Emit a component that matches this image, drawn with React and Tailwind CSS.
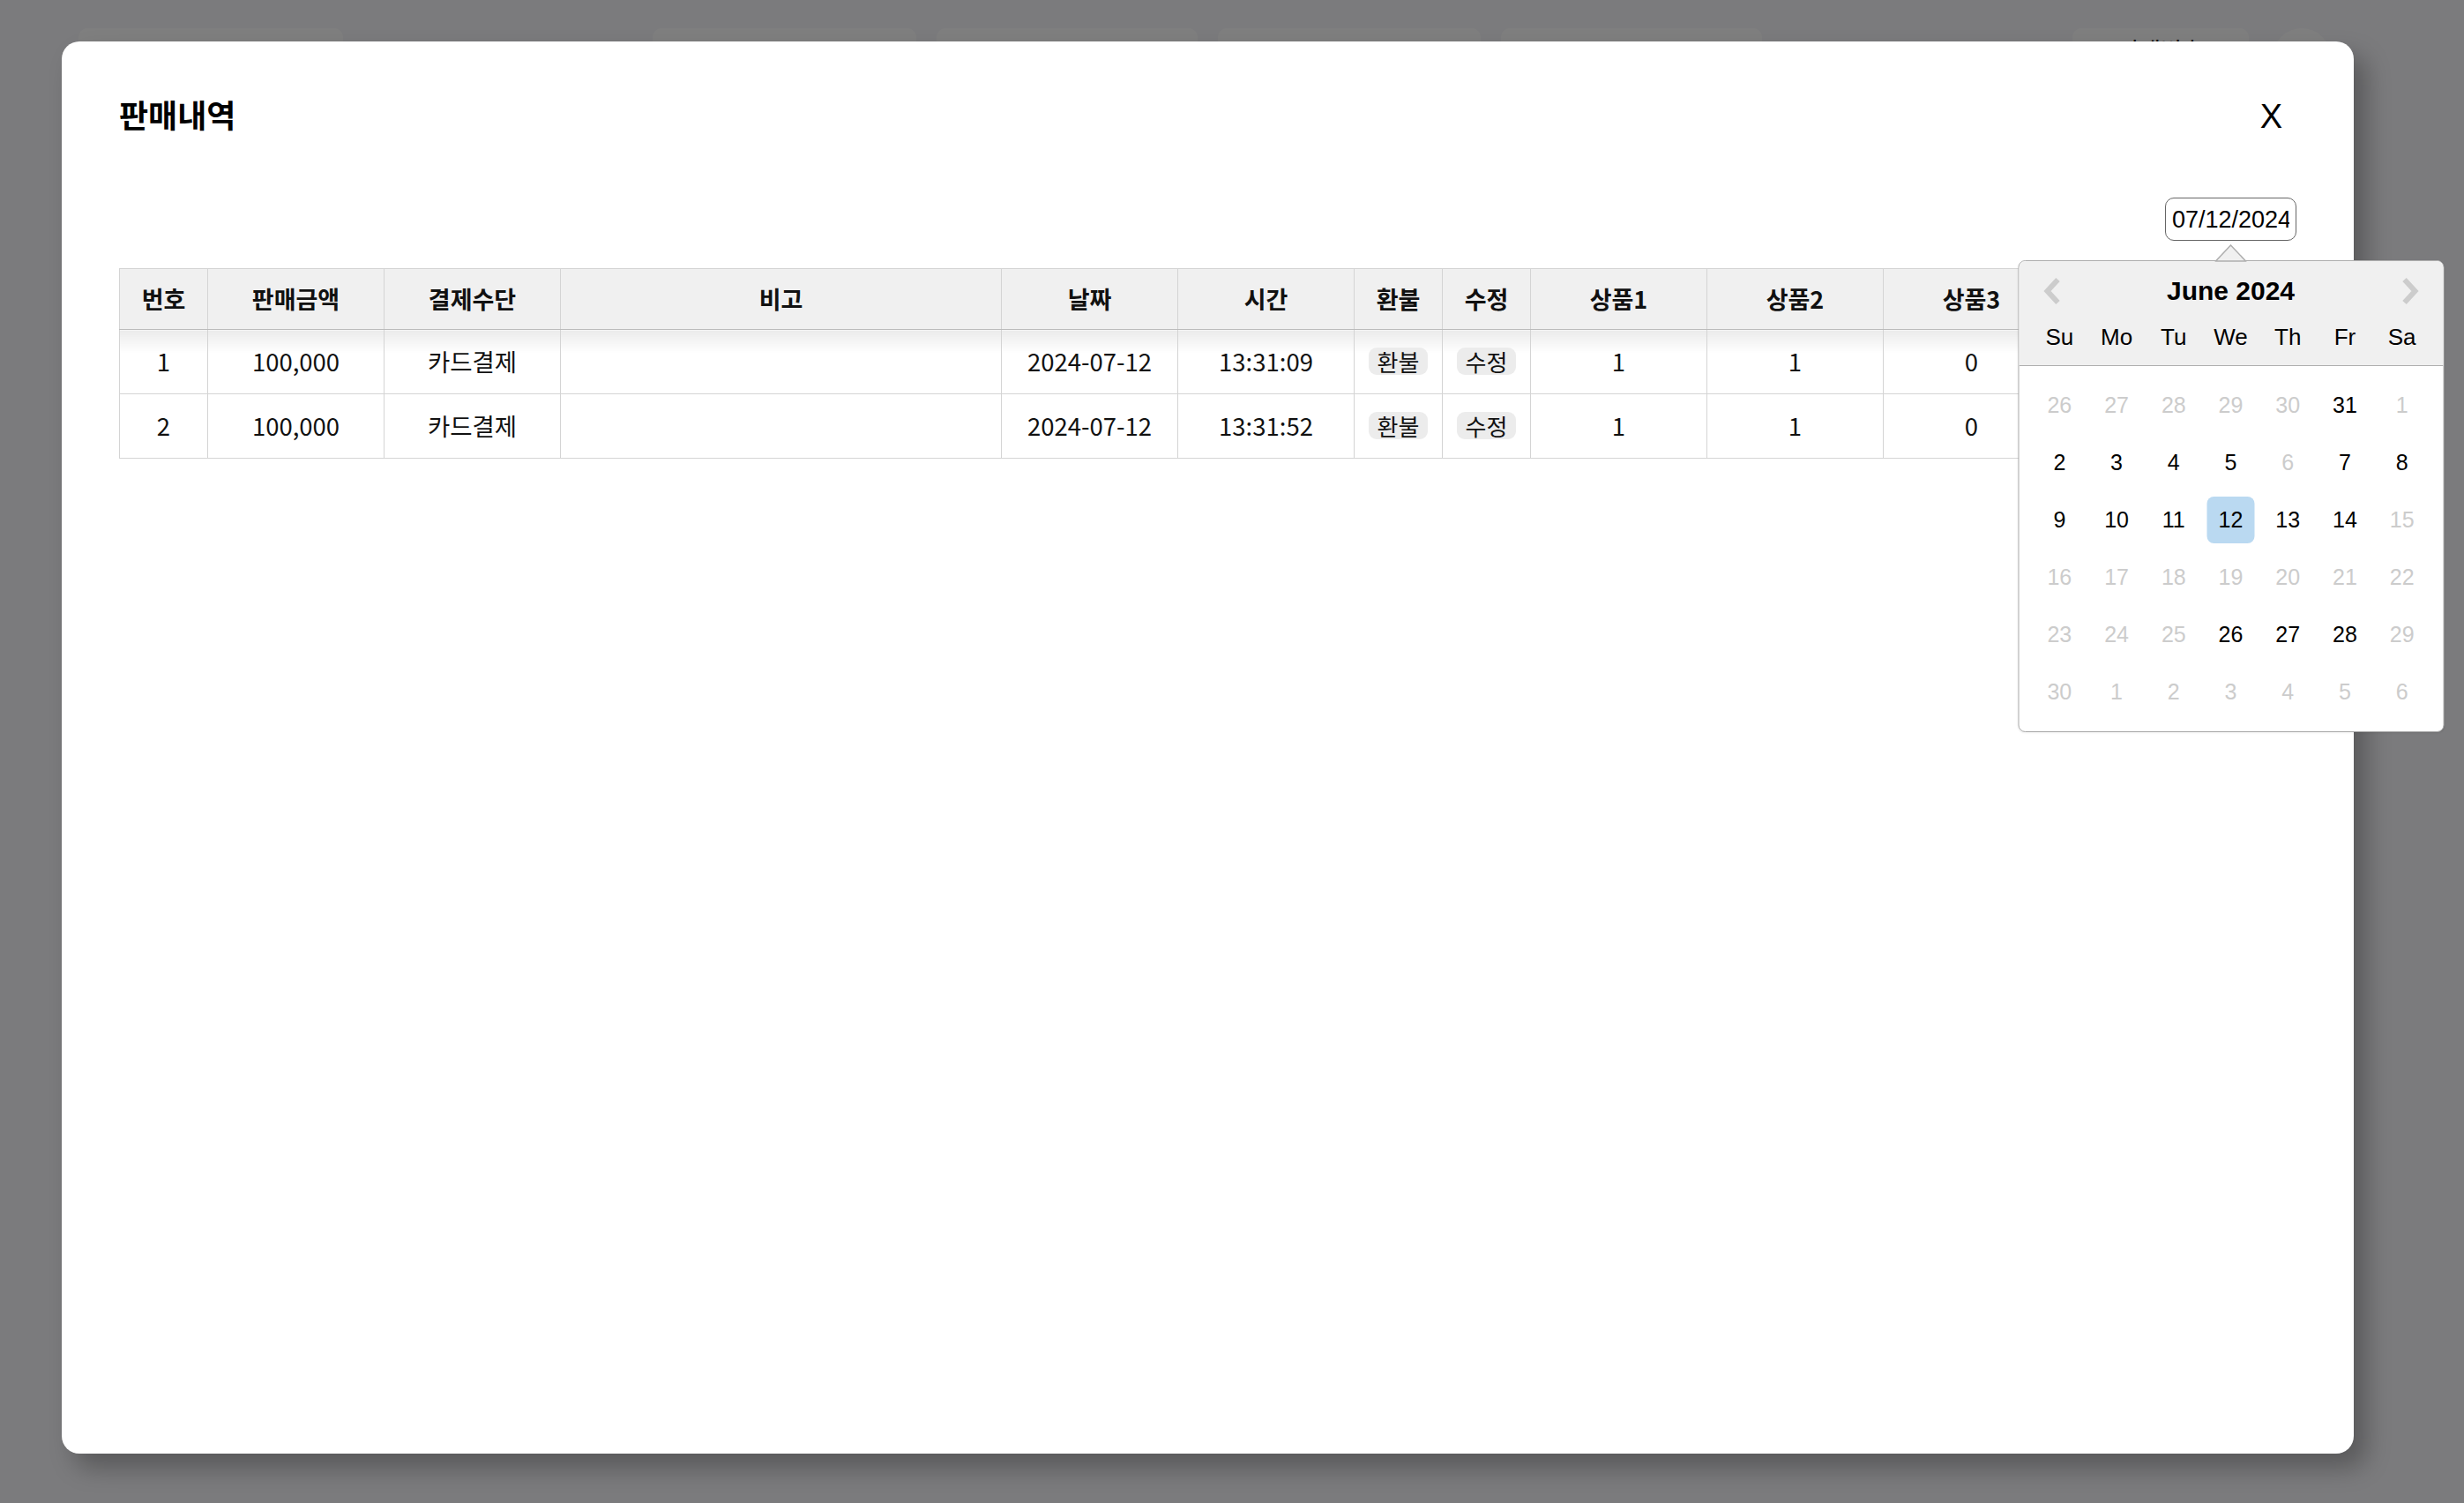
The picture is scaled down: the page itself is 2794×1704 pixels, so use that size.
import React from 'react';

const columns = [
  { key: 'no', label: '번호', width: 100 },
  { key: 'amount', label: '판매금액', width: 200 },
  { key: 'method', label: '결제수단', width: 200 },
  { key: 'memo', label: '비고', width: 500 },
  { key: 'date', label: '날짜', width: 200 },
  { key: 'time', label: '시간', width: 200 },
  { key: 'refund', label: '환불', width: 100 },
  { key: 'edit', label: '수정', width: 100 },
  { key: 'p1', label: '상품1', width: 200 },
  { key: 'p2', label: '상품2', width: 200 },
  { key: 'p3', label: '상품3', width: 200 },
  // last column sits under the date picker popup
  { key: 'rest', label: '', width: 269 },
];

const sales = [
  { no: 1, amount: '100,000', method: '카드결제', memo: '', date: '2024-07-12', time: '13:31:09', p1: 1, p2: 1, p3: 0, rest: '' },
  { no: 2, amount: '100,000', method: '카드결제', memo: '', date: '2024-07-12', time: '13:31:52', p1: 1, p2: 1, p3: 0, rest: '' },
];

// 0 = disabled, 1 = normal, 2 = selected
const weeks = [
  [[26, 0], [27, 0], [28, 0], [29, 0], [30, 0], [31, 1], [1, 0]],
  [[2, 1], [3, 1], [4, 1], [5, 1], [6, 0], [7, 1], [8, 1]],
  [[9, 1], [10, 1], [11, 1], [12, 2], [13, 1], [14, 1], [15, 0]],
  [[16, 0], [17, 0], [18, 0], [19, 0], [20, 0], [21, 0], [22, 0]],
  [[23, 0], [24, 0], [25, 0], [26, 1], [27, 1], [28, 1], [29, 0]],
  [[30, 0], [1, 0], [2, 0], [3, 0], [4, 0], [5, 0], [6, 0]],
];

const dayNames = ['Su', 'Mo', 'Tu', 'We', 'Th', 'Fr', 'Sa'];

function Chevron({ dir }) {
  const points = dir === 'left' ? '17,4 5,17 17,30' : '5,4 17,17 5,30';
  return (
    <svg width="22" height="34" viewBox="0 0 22 34">
      <polyline points={points} fill="none" stroke="#cccccc" strokeWidth="6" strokeLinejoin="miter" />
    </svg>
  );
}

function DatePickerPopup() {
  return (
    <div className="absolute left-1/2 -translate-x-1/2 top-[71px] w-[483px] z-20 font-['Liberation_Sans',Arial,sans-serif]">
      <svg className="absolute left-1/2 -translate-x-1/2 top-[-18px]" width="36" height="20" viewBox="0 0 36 20">
        <polygon points="1,19 18,1 35,19" fill="#f0f0f0" stroke="#aeaeae" strokeWidth="1.5" />
      </svg>
      <div className="bg-white border border-[#aeaeae] rounded-[8px] shadow-[0_1px_2px_rgba(0,0,0,0.08)]">
        <div className="bg-[#f0f0f0] border-b border-[#aeaeae] rounded-t-[8px] pt-[17px] pb-[17px] px-[14px]">
          <div className="flex items-center justify-between h-[34px] px-[13px]">
            <Chevron dir="left" />
            <span className="text-[30px] leading-[34px] font-bold text-black">June 2024</span>
            <Chevron dir="right" />
          </div>
          <div className="grid grid-cols-7 mt-[20px] h-[30px]">
            {dayNames.map((d) => (
              <div key={d} className="text-center text-[26px] leading-[30px] text-black">{d}</div>
            ))}
          </div>
        </div>
        <div className="px-[14px] pt-[12px] pb-[12px]">
          {weeks.map((week, wi) => (
            <div key={wi} className="grid grid-cols-7 h-[65px]">
              {week.map(([d, s], di) => (
                <div key={di} className="flex items-center justify-center">
                  <div
                    className={
                      s === 2
                        ? 'w-[54px] h-[53px] rounded-[8px] bg-[#bad9f1] flex items-center justify-center text-[25px] text-black'
                        : s === 1
                        ? 'w-[54px] h-[53px] flex items-center justify-center text-[25px] text-black'
                        : 'w-[54px] h-[53px] flex items-center justify-center text-[25px] text-[#cccccc]'
                    }
                  >
                    {d}
                  </div>
                </div>
              ))}
            </div>
          ))}
        </div>
      </div>
    </div>
  );
}

function Badge({ children }) {
  return (
    <span className="inline-block bg-[#ececec] rounded-[9px] px-[10px] h-[31px] leading-[31px] text-[26px] text-[#111]">
      {children}
    </span>
  );
}

function SalesTable() {
  return (
    <table className="table-fixed border-collapse w-[2469px] font-['Noto_Sans_CJK_KR',sans-serif] text-[#111]">
      <colgroup>
        {columns.map((c) => (
          <col key={c.key} style={{ width: c.width }} />
        ))}
      </colgroup>
      <thead>
        <tr className="h-[69px]">
          {columns.map((c) => (
            <th
              key={c.key}
              className="p-0 bg-[#f0f0f0] border border-[#d4d4d4] border-b-[#bbbbbb] text-[27px] font-bold text-center"
            >
              {c.label}
            </th>
          ))}
        </tr>
      </thead>
      <tbody>
        {sales.map((row, i) => (
          <tr key={row.no} className="h-[73px]">
            {columns.map((c) => (
              <td
                key={c.key}
                className={
                  i === 0
                    ? 'p-0 border border-[#d4d4d4] text-center text-[27.5px] bg-[linear-gradient(to_bottom,rgba(0,0,0,0.08),rgba(0,0,0,0)_26px)]'
                    : 'p-0 border border-[#d4d4d4] text-center text-[27.5px]'
                }
              >
                {c.key === 'refund' ? <Badge>환불</Badge> : c.key === 'edit' ? <Badge>수정</Badge> : row[c.key]}
              </td>
            ))}
          </tr>
        ))}
      </tbody>
    </table>
  );
}

export default function App() {
  return (
    <div className="relative h-[1704px] w-full overflow-hidden bg-[#f6f6fa]">
      {/* page behind the modal */}
      <div className="flex items-start pt-[32px] pl-[89px] font-['Noto_Sans_CJK_KR',sans-serif]">
        <div className="w-[300px] h-[60px] rounded-[10px] bg-white" />
        <div className="w-[351px]" />
        <div className="flex gap-[23px]">
          <div className="w-[299px] h-[60px] rounded-[10px] bg-white" />
          <div className="w-[296px] h-[60px] rounded-[10px] bg-white" />
          <div className="w-[298px] h-[60px] rounded-[10px] bg-white" />
          <div className="w-[296px] h-[60px] rounded-[10px] bg-white" />
        </div>
        <div className="w-[352px]" />
        <div className="w-[200px] h-[60px] rounded-[10px] bg-white flex justify-center pt-[4px] text-[26px] text-black">
          판매번호
        </div>
        <div className="ml-[27px] w-[66px] h-[66px] rounded-full bg-white" />
      </div>

      {/* overlay + modal */}
      <div className="absolute inset-0 bg-black/50">
        <div className="ml-[70px] mt-[47px] w-[2599px] h-[1601px] bg-white rounded-[20px] shadow-[14px_16px_28px_rgba(0,0,0,0.28)] px-[65px] pt-[64px]">
          <div className="flex items-center justify-between h-[36px]">
            <h2 className="text-[36px] font-bold leading-none text-black font-['Noto_Sans_CJK_KR',sans-serif]">판매내역</h2>
            <button className="mr-[16px] mt-[6px] text-[38px] leading-none text-black font-['Liberation_Sans',Arial,sans-serif]">X</button>
          </div>
          <div className="flex justify-end mt-[77px]">
            <div className="relative">
              <input
                readOnly
                value="07/12/2024"
                className="w-[149px] h-[49px] border border-[#666] rounded-[10px] px-[7px] pt-[2px] text-[27px] text-black font-['Liberation_Sans',Arial,sans-serif] outline-none"
              />
              <DatePickerPopup />
            </div>
          </div>
          <div className="mt-[31px]">
            <SalesTable />
          </div>
        </div>
      </div>
    </div>
  );
}
